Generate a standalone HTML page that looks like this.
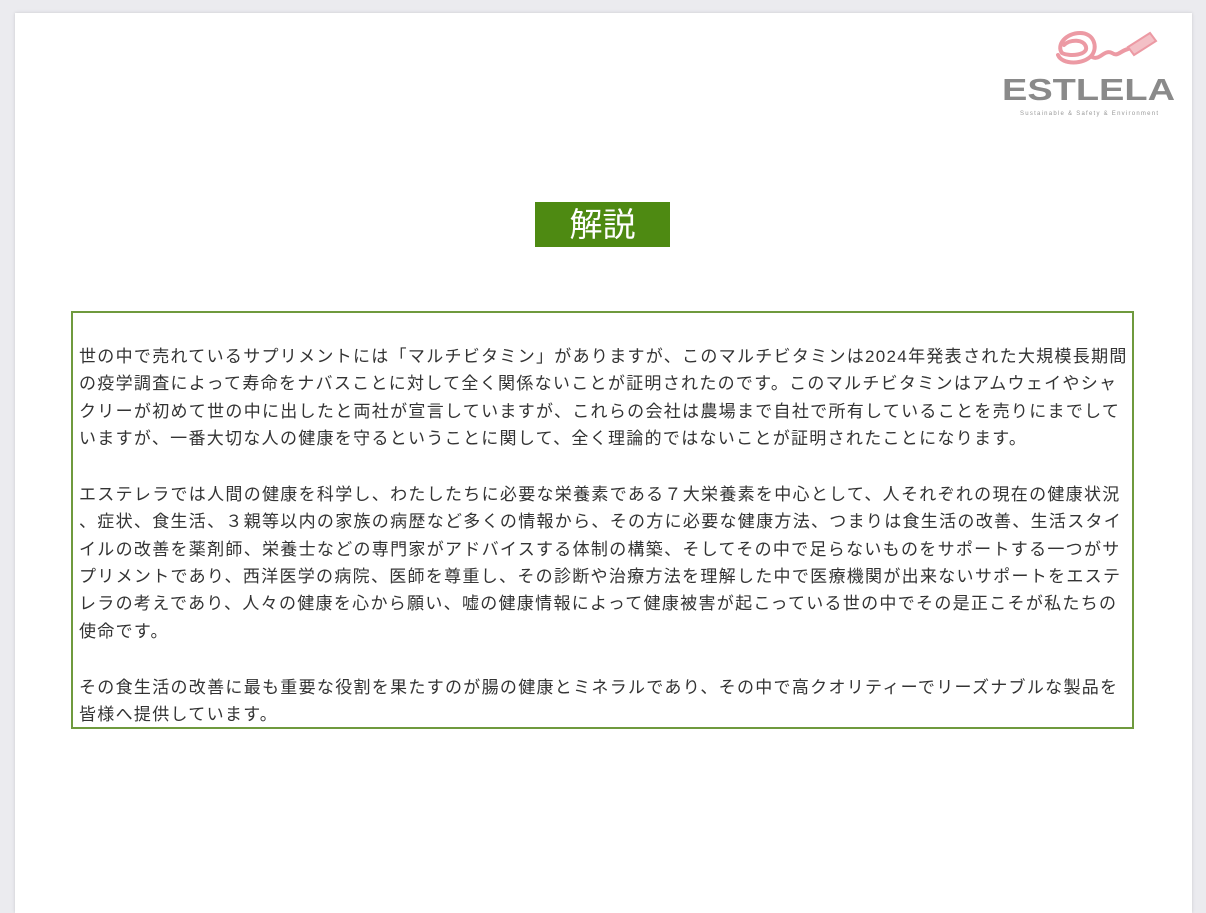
<!DOCTYPE html>
<html><head><meta charset="utf-8"><style>
body{margin:0;width:1206px;height:893px;background:#ebebef;overflow:hidden;font-family:"Liberation Sans","Noto Sans CJK JP",sans-serif;}
.page{position:absolute;left:15px;top:13px;width:1177px;height:900px;background:#fff;box-shadow:0 0 3px #c8c8cc;}
.title{position:absolute;left:535px;top:202px;width:135px;height:45px;background:#4e8a12;color:#fff;font-size:33px;line-height:45px;text-align:center;}
.box{position:absolute;left:71px;top:311px;width:1059px;height:414px;border:2px solid #6f9a3e;}
.txt{position:absolute;left:79px;top:343px;font-size:17px;line-height:27.3px;color:#333;white-space:nowrap;letter-spacing:1.3px;}
.txt p{margin:0 0 29px 0;}
.logo{position:absolute;left:1000px;top:25px;}
</style></head><body>
<div class="page"></div>
<div class="logo">
<svg width="180" height="95" viewBox="0 0 180 95">
<g fill="none" stroke="#ec9aa4" stroke-width="4" stroke-linecap="round">
<path d="M64 20 C70 14 84 14 86 22 C88 30 70 32 62 28 C56 20 66 8 80 8 C94 8 98 22 92 30 C84 40 62 40 58 30"/>
<path d="M92 32 C100 36 104 24 112 28 C118 32 120 26 128 24"/>
</g>
<path d="M128 22 L150 8 L156 16 L134 30 Z" fill="#f3c0c6" stroke="#ec9aa4" stroke-width="2"/>
<text x="2" y="75" font-family="Liberation Sans,sans-serif" font-size="31" font-weight="bold" fill="#8a8a8a" textLength="173" lengthAdjust="spacingAndGlyphs">ESTLELA</text>
<text x="20" y="90" font-family="Liberation Sans,sans-serif" font-size="6" fill="#999" textLength="138">Sustainable &amp; Safety &amp; Environment</text>
</svg></div>
<div class="title">解説</div>
<div class="box"></div>
<div class="txt">
<p>世の中で売れているサプリメントには「マルチビタミン」がありますが、このマルチビタミンは2024年発表された大規模長期間<br>の疫学調査によって寿命をナバスことに対して全く関係ないことが証明されたのです。このマルチビタミンはアムウェイやシャ<br>クリーが初めて世の中に出したと両社が宣言していますが、これらの会社は農場まで自社で所有していることを売りにまでして<br>いますが、一番大切な人の健康を守るということに関して、全く理論的ではないことが証明されたことになります。</p>
<p>エステレラでは人間の健康を科学し、わたしたちに必要な栄養素である７大栄養素を中心として、人それぞれの現在の健康状況<br>、症状、食生活、３親等以内の家族の病歴など多くの情報から、その方に必要な健康方法、つまりは食生活の改善、生活スタイ<br>イルの改善を薬剤師、栄養士などの専門家がアドバイスする体制の構築、そしてその中で足らないものをサポートする一つがサ<br>プリメントであり、西洋医学の病院、医師を尊重し、その診断や治療方法を理解した中で医療機関が出来ないサポートをエステ<br>レラの考えであり、人々の健康を心から願い、嘘の健康情報によって健康被害が起こっている世の中でその是正こそが私たちの<br>使命です。</p>
<p>その食生活の改善に最も重要な役割を果たすのが腸の健康とミネラルであり、その中で高クオリティーでリーズナブルな製品を<br>皆様へ提供しています。</p>
</div>
</body></html>
